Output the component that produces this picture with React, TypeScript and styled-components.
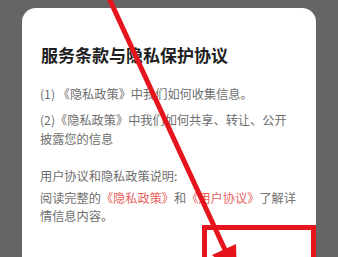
import React from "react";
import styled, { createGlobalStyle } from "styled-components";

const GlobalStyle = createGlobalStyle`
  html, body {
    margin: 0;
    padding: 0;
    background: #656565;
    overflow: hidden;
  }
  body {
    font-family: "Noto Sans CJK SC", "Noto Sans", sans-serif;
  }
`;

const Screen = styled.div`
  position: relative;
  width: 338px;
  height: 257px;
  overflow: hidden;
  background: #656565;
  padding: 8px 22px 0;
  box-sizing: border-box;
`;

const Card = styled.div`
  background: #ffffff;
  border-radius: 14px 14px 0 0;
  height: 300px;
  padding: 35px 20px 0 18px;
  box-sizing: border-box;
`;

const Title = styled.h1`
  margin: 0 0 18px;
  font-size: 17px;
  line-height: 24px;
  font-weight: 700;
  color: #1e1e1e;
  padding-left: 1px;
`;

const Para = styled.p<{ $lh: number; $gap: number }>`
  margin: 0 0 ${(p) => p.$gap}px;
  font-size: 12.2px;
  line-height: ${(p) => p.$lh}px;
  color: #6e6e6e;
`;

const Link = styled.span`
  color: #e8625e;
`;

const Overlay = styled.svg`
  position: absolute;
  left: 0;
  top: 0;
  pointer-events: none;
`;

export default function App() {
  return (
    <>
      <GlobalStyle />
      <Screen>
        <Card>
          <Title>服务条款与隐私保护协议</Title>
          <Para $lh={19} $gap={7}>(1) 《隐私政策》中我们如何收集信息。</Para>
          <Para $lh={19} $gap={18}>(2)《隐私政策》中我们如何共享、转让、公开披露您的信息</Para>
          <Para $lh={18} $gap={4}>用户协议和隐私政策说明:</Para>
          <Para $lh={18} $gap={0}>
            <span>阅读完整的</span>
            <Link>《隐私政策》</Link>
            <span>和</span>
            <Link>《用户协议》</Link>
            <span>了解详</span>
            <span>情信息内容。</span>
          </Para>
        </Card>
        <Overlay width="338" height="257" viewBox="0 0 338 257">
          <line x1="108" y1="-4" x2="226" y2="252" stroke="#e6141c" strokeWidth="5" />
          <polygon points="212,255 236,244 237,276" fill="#e6141c" />
          <rect x="204.5" y="227.5" width="109" height="60" fill="none" stroke="#e6141c" strokeWidth="5" />
        </Overlay>
      </Screen>
    </>
  );
}
